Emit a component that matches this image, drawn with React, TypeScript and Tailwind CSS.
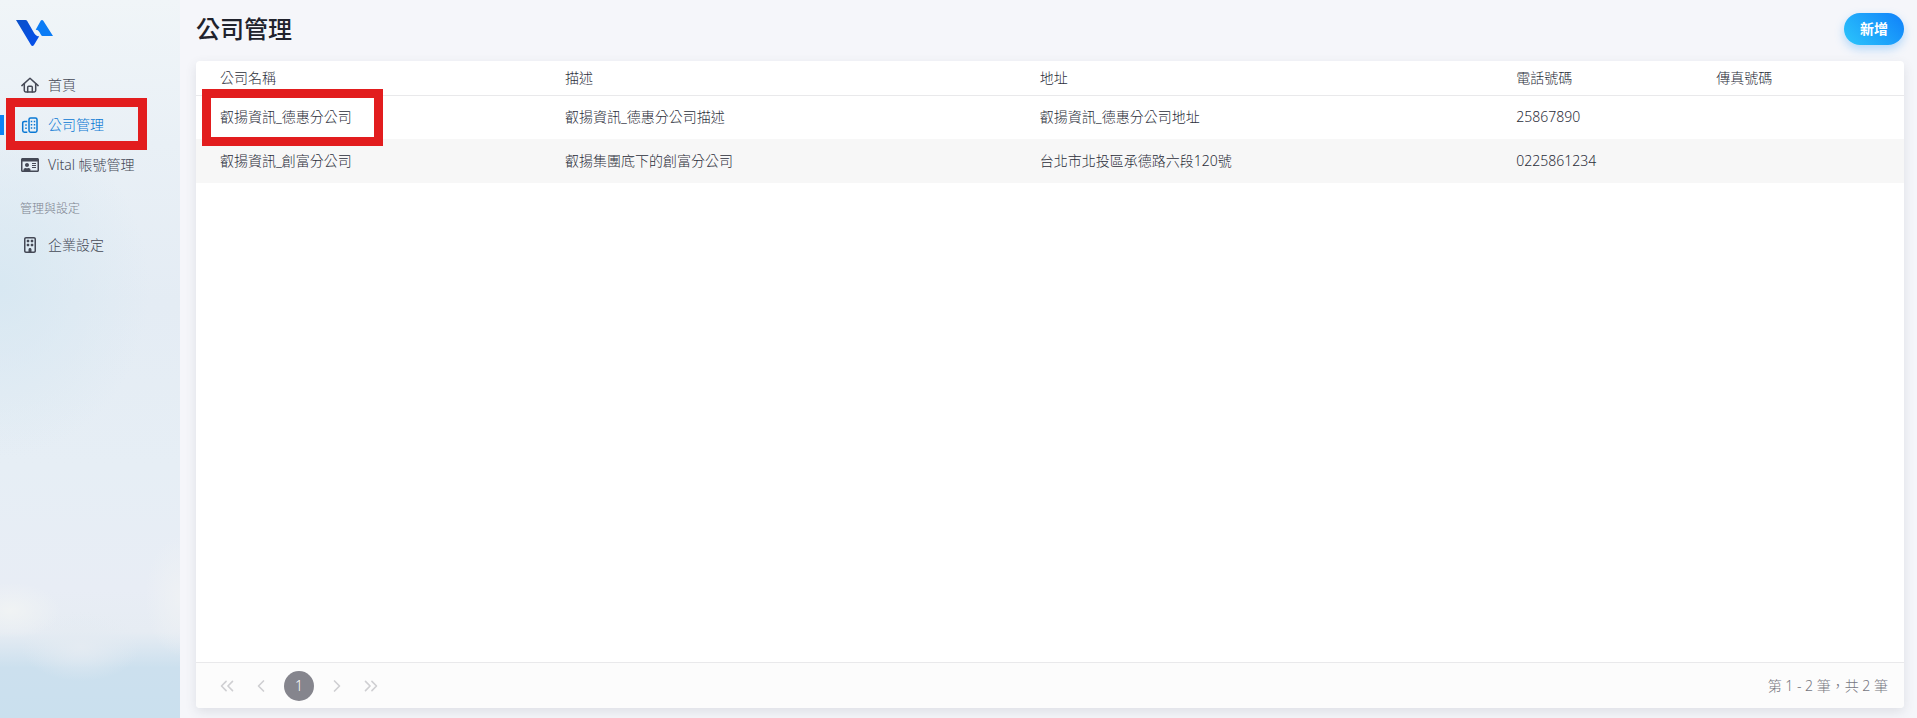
import type { ReactNode } from "react";
import { FaRegIdCard } from "react-icons/fa";
import { FaRegBuilding } from "react-icons/fa6";
import { ChevronLeft, ChevronRight, ChevronsLeft, ChevronsRight } from "lucide-react";

function Logo() {
  return (
    <svg viewBox="0 0 37 26" className="h-[26px] w-[37px]" role="img" aria-label="Vital">
      <defs>
        <linearGradient id="logo-left" x1="0" y1="0" x2="1" y2="1">
          <stop offset="0" stopColor="#0a50c8" />
          <stop offset="1" stopColor="#0550ee" />
        </linearGradient>
      </defs>
      <path d="M0 0H9.5Q10.6 0 11.2 1L18.2 13.2Q20 16.3 23.2 16.3L18 25Q17.3 26 16.4 26Q15.6 26 15 25L0 0Z" fill="url(#logo-left)" />
      <path d="M19.7 9.8L24.7 .8Q25.2 0 26 0Q26.8 0 27.3 .8L37 16H26.5Q25.6 16 25.1 15.1L23.4 12Q22.2 9.9 19.7 9.8Z" fill="#0b7cf5" />
    </svg>
  );
}

function HomeIcon() {
  return (
    <svg viewBox="0 0 18 16" className="h-4 w-[18px]" fill="none" stroke="currentColor" strokeWidth="1.5" strokeLinecap="round" strokeLinejoin="round">
      <path d="M.9 8.6L9 1.2L17.1 8.6" />
      <path d="M3.3 6.8V13.6Q3.3 15 4.7 15H13.3Q14.7 15 14.7 13.6V6.8" />
      <path d="M6.7 15V10.2Q6.7 9.2 7.7 9.2H10.3Q11.3 9.2 11.3 10.2V15" />
    </svg>
  );
}

function CompanyIcon() {
  return (
    <svg viewBox="0 0 18 16" className="h-4 w-[18px]" fill="none" stroke="currentColor" strokeWidth="1.5" strokeLinejoin="round">
      <rect x="8" y=".9" width="8" height="14.3" rx="1.6" />
      <path d="M6.3 4.4H3.4Q1.7 4.4 1.7 6.1V13.5Q1.7 15.2 3.4 15.2H6.3" />
      <path d="M10.5 3.8V5.3M13.5 3.8V5.3M10.5 7V8.5M13.5 7V8.5M10.5 10.2V11.7M13.5 10.2V11.7M5 7.2V8.7M5 10.6V12.1" />
    </svg>
  );
}

function NavItem({ icon, label, active = false }: { icon: ReactNode; label: string; active?: boolean }) {
  return (
    <li className="relative">
      <a
        href="#"
        aria-current={active ? "page" : undefined}
        className={`flex h-10 items-center pl-5 text-sm ${active ? "text-[#0878d4]" : "text-[#454956]"}`}
      >
        <span className="mr-2 flex w-5 justify-center">{icon}</span>
        {label}
      </a>
      {active && (
        <>
          <span className="absolute left-0 top-[10px] h-5 w-1 bg-[#0c84f4]" />
          <span className="pointer-events-none absolute -top-[7px] left-[6px] h-[52px] w-[141px] border-[9px] border-[#e21d1e]" />
        </>
      )}
    </li>
  );
}

const columns = ["公司名稱", "描述", "地址", "電話號碼", "傳真號碼"];
const rows = [
  ["叡揚資訊_德惠分公司", "叡揚資訊_德惠分公司描述", "叡揚資訊_德惠分公司地址", "25867890", ""],
  ["叡揚資訊_創富分公司", "叡揚集團底下的創富分公司", "台北市北投區承德路六段120號", "0225861234", ""],
];

export default function App() {
  return (
    <div className="flex min-h-screen bg-[#f5f6fa] font-['Noto_Sans','Noto_Sans_CJK_TC',sans-serif] font-light text-[#2b2e3a]">
      <aside className="relative w-[180px] shrink-0 overflow-hidden bg-[linear-gradient(180deg,#f0f5f8_0%,#e9f0f6_20%,#e4ecf4_42%,#e6eef5_65%,#e8edf5_82%,#e6ecf3_88%,#cce0ee_93%,#cae0ee_100%)]">
        <div className="absolute inset-0 bg-[radial-gradient(ellipse_150px_170px_at_0%_40%,#d8e8f2_0%,#d8e8f200_100%),radial-gradient(ellipse_50px_28px_at_6%_85%,#f0f3f4_0%,#f0f3f400_100%),radial-gradient(ellipse_35px_60px_at_100%_83%,#eef1f4_0%,#eef1f400_100%),radial-gradient(ellipse_60px_35px_at_45%_90%,#e4ebf2_0%,#e4ebf200_100%)]" />
        <div className="relative">
          <a href="#" className="block pb-[19px] pl-4 pt-5"><Logo /></a>
          <nav aria-label="主選單">
            <ul>
              <NavItem icon={<HomeIcon />} label="首頁" />
              <NavItem icon={<CompanyIcon />} label="公司管理" active />
              <NavItem icon={<FaRegIdCard className="h-4 w-[18px]" />} label="Vital 帳號管理" />
            </ul>
            <h2 className="flex h-10 items-center pl-5 pt-2 text-xs text-[#7d838f]">管理與設定</h2>
            <ul>
              <NavItem icon={<FaRegBuilding className="size-4" />} label="企業設定" />
            </ul>
          </nav>
        </div>
      </aside>

      <main className="flex min-w-0 flex-1 flex-col px-4 pb-[10px] pr-[13px]">
        <header className="flex h-[61px] items-center justify-between pb-[3px]">
          <h1 className="text-2xl font-medium text-[#20222c]">公司管理</h1>
          <button
            type="button"
            className="h-8 w-[60px] rounded-full bg-[linear-gradient(45deg,#2cc6fb,#0f80fa)] text-sm font-bold text-white shadow-[0_4px_10px_#4aa8f966]"
          >
            新增
          </button>
        </header>

        <section className="flex flex-1 flex-col rounded bg-white shadow-[0_4px_12px_#3d40501f]">
          <table className="w-full table-fixed text-left text-sm">
            <colgroup>
              <col className="w-[20.2%]" />
              <col className="w-[27.8%]" />
              <col className="w-[27.9%]" />
              <col className="w-[11.7%]" />
              <col className="w-[12.4%]" />
            </colgroup>
            <thead>
              <tr className="h-[34px] border-b border-[#e9e9eb]">
                {columns.map((name) => (
                  <th key={name} scope="col" className="px-6 font-light">{name}</th>
                ))}
              </tr>
            </thead>
            <tbody>
              {rows.map((row, i) => (
                <tr key={row[0]} className="h-11 even:bg-[#f7f7f7]">
                  {row.map((cell, j) => (
                    <td key={j} className="relative px-6">
                      {cell}
                      {i === 0 && j === 0 && (
                        <span className="pointer-events-none absolute -top-[7px] left-[6px] z-10 h-[57px] w-[181px] border-[9px] border-[#e21d1e]" />
                      )}
                    </td>
                  ))}
                </tr>
              ))}
            </tbody>
          </table>

          <footer className="mt-auto flex h-[46px] items-center justify-between rounded-b border-t border-[#e9e9eb] bg-[#fcfcfc] pl-[15px] pr-4">
            <nav aria-label="分頁" className="flex items-center gap-0.5 text-[#cfcfd2]">
              <button type="button" aria-label="第一頁" className="flex size-8 items-center justify-center"><ChevronsLeft className="size-[22px]" strokeWidth={1.75} /></button>
              <button type="button" aria-label="上一頁" className="flex size-8 items-center justify-center"><ChevronLeft className="size-5" strokeWidth={2} /></button>
              <button type="button" aria-current="page" className="mx-[5px] size-[30px] rounded-full bg-[#85858d] text-sm text-white">1</button>
              <button type="button" aria-label="下一頁" className="flex size-8 items-center justify-center"><ChevronRight className="size-5" strokeWidth={2} /></button>
              <button type="button" aria-label="最末頁" className="flex size-8 items-center justify-center"><ChevronsRight className="size-[22px]" strokeWidth={1.75} /></button>
            </nav>
            <p className="text-sm text-[#75767f]">第 1 - 2 筆，共 2 筆</p>
          </footer>
        </section>
      </main>
    </div>
  );
}
